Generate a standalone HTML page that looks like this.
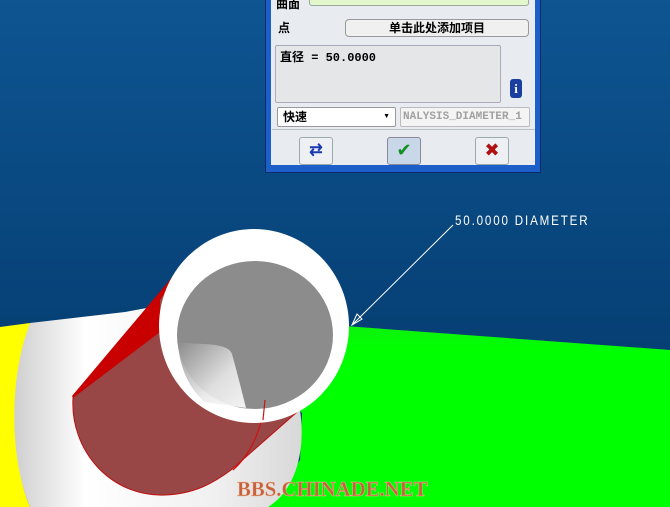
<!DOCTYPE html>
<html><head><meta charset="utf-8"><style>
html,body{margin:0;padding:0;width:670px;height:507px;overflow:hidden;background:#0a4a82;}
.cjk{font-family:"Liberation Sans","Noto Sans CJK SC",sans-serif;}
#dlg{position:absolute;left:265px;top:-4px;width:276px;height:177px;background:#1d5fc8;border:1px solid #0a2a6a;box-sizing:border-box;}
#in{position:absolute;left:5px;top:0;width:264px;height:168px;background:#e8ecf0;}
.abs{position:absolute;box-sizing:border-box;}
</style></head><body>
<svg width="670" height="507" style="position:absolute;left:0;top:0">
<defs>
<linearGradient id="bg" x1="0" y1="0" x2="0" y2="1"><stop offset="0" stop-color="#0e5592"/><stop offset="1" stop-color="#023566"/></linearGradient>
<linearGradient id="wp" x1="0" y1="0" x2="1" y2="0"><stop offset="0" stop-color="#cfcfcf"/><stop offset="0.25" stop-color="#ffffff"/><stop offset="0.7" stop-color="#f0f0f0"/><stop offset="1" stop-color="#d8d8d8"/></linearGradient>
<linearGradient id="gr" x1="0" y1="0" x2="0" y2="1"><stop offset="0" stop-color="#10f010"/><stop offset="0.15" stop-color="#00ff00"/><stop offset="1" stop-color="#00ff00"/></linearGradient>
<linearGradient id="hl" x1="0" y1="0" x2="1" y2="1"><stop offset="0" stop-color="#8c8c8c"/><stop offset="0.6" stop-color="#e8e8e8"/><stop offset="1" stop-color="#ffffff"/></linearGradient>
</defs>
<rect width="670" height="507" fill="url(#bg)"/>
<path d="M290,322 L670,350 L670,507 L265,507 L300,460 L302,413 L290,400 Z" fill="url(#gr)"/>
<path d="M0,327 L30,323 C12,380 10,460 30,507 L0,507 Z" fill="#ffff00"/>
<path d="M30,323 L125,312 L190,300 L300,410 C306,450 296,490 268,507 L30,507 C10,460 8,380 30,323 Z" fill="url(#wp)"/>
<path d="M193,253 L73,398 C70,450 110,497 165,495 C195,494 215,482 231,470 L305,405 Z" fill="#984646" stroke="#c01010" stroke-width="1"/>
<path d="M195,250 L160,300 L160,332 L73,398 L72,396 Z" fill="#c80000"/>
<path d="M265,400 C262,430 250,455 233,470" stroke="#d01010" stroke-width="1.2" fill="none"/>
<ellipse cx="254" cy="326" rx="95" ry="97" fill="#ffffff"/>
<ellipse cx="255" cy="335" rx="78" ry="74" fill="#8c8c8c"/>
<path d="M178,342 C200,345 228,342 232,354 C237,372 242,392 246,408 L205,402 C188,388 179,365 178,342 Z" fill="url(#hl)" opacity="0.9"/>
<path d="M265,400 L263,420" stroke="#d01010" stroke-width="1.2"/>
<line x1="453" y1="225" x2="352" y2="325" stroke="#ffffff" stroke-width="1"/>
<path d="M352,325 L357,314 L362,319 Z" fill="none" stroke="#fff" stroke-width="1"/>
<text x="455" y="225" fill="#ffffff" font-family="Liberation Sans,sans-serif" font-size="14" letter-spacing="2.2" transform="translate(455,0) scale(0.83,1) translate(-455,0)">50.0000 DIAMETER</text>
<text x="237" y="496" fill="#c8603c" stroke="#f0c0a0" stroke-width="0.4" font-family="Liberation Serif,serif" font-weight="bold" font-size="21" transform="translate(237,0) scale(0.99,1) translate(-237,0)">BBS.CHINADE.NET</text>
</svg>
<div id="dlg"><div id="in">
<div class="abs cjk" style="left:5px;top:-2px;font-size:12px;font-weight:bold">曲面</div>
<div class="abs" style="left:38px;top:-4px;width:220px;height:13px;background:#e4f7cc;border:1px solid #9a9;border-radius:3px"></div>
<div class="abs cjk" style="left:7px;top:22px;font-size:12px;font-weight:bold">点</div>
<div class="abs cjk" style="left:74px;top:22px;width:184px;height:18px;border:1px solid #999;border-radius:4px;background:#f0f0f0;font-size:12px;font-weight:bold;text-align:center;line-height:16px">单击此处添加项目</div>
<div class="abs cjk" style="left:4px;top:48px;width:226px;height:58px;border:1px solid #aab;border-radius:2px;background:#e4e6e8;font-size:12px;font-weight:bold;padding:2px 4px;font-family:'Liberation Mono','Noto Sans CJK SC',monospace">直径 = 50.0000</div>
<div class="abs" style="left:239px;top:82px;width:12px;height:19px;background:#1b3fa0;border-radius:3px;color:#fff;font:bold 13px 'Liberation Serif',serif;text-align:center;line-height:19px">i</div>
<div class="abs" style="left:1px;top:132px;width:263px;height:1px;background:#b8c0c8"></div>
<div class="abs cjk" style="left:6px;top:110px;width:119px;height:20px;border:1px solid #999;border-radius:2px;background:#fff;font-size:12px;font-weight:bold;padding-left:5px;line-height:18px">快速<span style="position:absolute;right:5px;top:0;font-size:7px">▼</span></div>
<div class="abs" style="left:129px;top:110px;width:130px;height:20px;border:1px solid #bbb;border-radius:2px;background:#f4f4f4;color:#a0a0a0;font:bold 11px 'Liberation Mono',monospace;line-height:18px;padding-left:2px;overflow:hidden;white-space:nowrap">NALYSIS_DIAMETER_1</div>
<div class="abs" style="left:28px;top:140px;width:34px;height:28px;border:1px solid #9aa;border-radius:3px;background:#eef0f4;color:#1a3ab0;font:bold 16px sans-serif;text-align:center;line-height:26px">⇄</div>
<div class="abs" style="left:116px;top:140px;width:34px;height:28px;border:1px solid #889;border-radius:3px;background:#c8d8e8;color:#109020;font:bold 18px 'DejaVu Sans',sans-serif;text-align:center;line-height:26px">✔</div>
<div class="abs" style="left:204px;top:140px;width:34px;height:28px;border:1px solid #9aa;border-radius:3px;background:#eef0f4;color:#b01010;font:bold 18px 'DejaVu Sans',sans-serif;text-align:center;line-height:26px">✖</div>
</div></div>
</body></html>
